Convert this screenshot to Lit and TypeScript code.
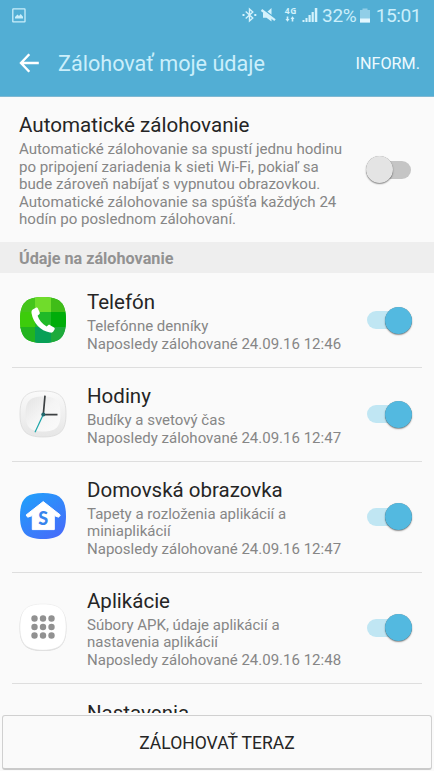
import { LitElement, html, svg, css } from "lit";
import { customElement, property } from "lit/decorators.js";

type Item = { icon: string; title: string; lines: string[] };

const ITEMS: Item[] = [
  { icon: "phone", title: "Telefón", lines: ["Telefónne denníky", "Naposledy zálohované 24.09.16 12:46"] },
  { icon: "clock", title: "Hodiny", lines: ["Budíky a svetový čas", "Naposledy zálohované 24.09.16 12:47"] },
  { icon: "home", title: "Domovská obrazovka", lines: ["Tapety a rozloženia aplikácií a", "miniaplikácií", "Naposledy zálohované 24.09.16 12:47"] },
  { icon: "apps", title: "Aplikácie", lines: ["Súbory APK, údaje aplikácií a", "nastavenia aplikácií", "Naposledy zálohované 24.09.16 12:48"] },
];

const SQUIRCLE = "M24 1C41 1 47 7 47 24S41 47 24 47S1 41 1 24S7 1 24 1Z";

const ICONS: Record<string, unknown> = {
  phone: svg`
    <defs>
      <clipPath id="c"><path d=${SQUIRCLE} /></clipPath>
      <linearGradient id="g" x1="0" y1="0" x2="1" y2="1"><stop offset="0" stop-color="#30c010" /><stop offset="1" stop-color="#12a53c" /></linearGradient>
    </defs>
    <g clip-path="url(#c)">
      <rect width="48" height="48" fill="url(#g)" />
      <rect width="16" height="16" fill="#45c51b" />
      <rect x="16" width="16" height="16" fill="#70dc2b" />
      <rect x="32" width="16" height="16" fill="#40bd18" />
      <rect y="16" width="16" height="16" fill="#3dcc0b" />
      <rect x="16" y="16" width="16" height="16" fill="#20b928" />
      <rect x="32" y="16" width="16" height="15" fill="#00ad0a" />
      <rect y="31" width="16" height="17" fill="#22b41f" />
      <rect x="16" y="31" width="16" height="17" fill="#08a057" />
      <rect x="32" y="31" width="16" height="17" fill="#1eaa3b" />
    </g>
    <path fill="#fff" d="M13.700 13.400 17.300 11.600C18 11.300 18.500 11.600 18.800 12.300L20.700 16.600C21 17.400 20.800 18 20 18.600L18.600 19.700C20.200 24.200 23 27.800 27.600 30.400L29.100 29.200C29.800 28.700 30.500 28.800 31.200 29.200L35 31.600C35.800 32.100 36 32.800 35.500 33.600L34.300 35.500C33.600 36.600 32.600 36.800 31 36.500C21.500 34.700 14.300 27.300 12.600 17.500C12.300 15.600 12.400 14.200 13.700 13.400Z" />`,
  clock: svg`
    <defs>
      <linearGradient id="f" x1="0" y1="0" x2="0" y2="1"><stop offset="0" stop-color="#fafafa" /><stop offset="1" stop-color="#e6e6e6" /></linearGradient>
      <linearGradient id="i" x1="0" y1="0" x2="1" y2="1"><stop offset="0" stop-color="#e3e3e3" /><stop offset=".5" stop-color="#f5f5f5" /><stop offset="1" stop-color="#fbfbfb" /></linearGradient>
    </defs>
    <path d=${SQUIRCLE} fill="url(#f)" stroke="#dadada" stroke-width=".8" />
    <path d="M24 6.500C37 6.500 41.500 11 41.500 24S37 41.500 24 41.500S6.500 37 6.500 24S11 6.500 24 6.500Z" fill="url(#i)" />
    <path d="M24.300 24.500 26 5.700M24.300 24.700H38.500" fill="none" stroke="#3c4042" stroke-width="1.700" />
    <path d="M24.300 24.500 16 42.200" stroke="#1ba4a8" stroke-width="1.200" />
    <circle cx="24.300" cy="24.500" r="2" fill="#20686d" />`,
  home: svg`
    <defs><linearGradient id="h" x1=".1" y1="0" x2=".8" y2="1"><stop offset="0" stop-color="#20a0fb" /><stop offset="1" stop-color="#466cfa" /></linearGradient></defs>
    <path d=${SQUIRCLE} fill="url(#h)" />
    <path fill="#fff" stroke="#fff" stroke-width="1" stroke-linejoin="round" d="M24.200 9.600 41.300 23 39.600 25.200 35.300 23.600V37.600H13.300V23.600L8.700 25.200 7.100 23Z" />
    <text x="24.300" y="32.600" text-anchor="middle" font-family="Lato, sans-serif" font-size="18" font-weight="900" fill="#3785ed">S</text>`,
  apps: svg`
    <path d=${SQUIRCLE} transform="translate(0 .7)" fill="#d4d4d4" stroke="#dedede" />
    <path d=${SQUIRCLE} fill="#fff" stroke="#e9e9e9" stroke-width=".5" />
    ${[15.5, 24, 32.5].map((y) => [15.5, 24, 32.5].map((x) => svg`<circle cx=${x} cy=${y} r="3.200" fill="#919191" />`))}`,
};

@customElement("backup-switch")
class BackupSwitch extends LitElement {
  @property({ type: Boolean }) on = false;
  static styles = css`
    :host { display: block; }
    .track { display: flex; align-items: center; width: 45px; height: 18px; border-radius: 9px; background: #c5c5c5; }
    .thumb { flex: none; width: 27px; height: 27px; border-radius: 50%; background: #e4e4e4; box-shadow: 0 1px 1.5px rgba(0, 0, 0, 0.45), 0 0 0.5px rgba(0, 0, 0, 0.4); }
    .on { justify-content: flex-end; background: #c0e6f3; }
    .on .thumb { background: #53b9e0; }
  `;
  render() {
    return html`<div class="track ${this.on ? "on" : ""}"><div class="thumb"></div></div>`;
  }
}

@customElement("app-icon")
class AppIcon extends LitElement {
  @property() name = "";
  static styles = css`
    :host, svg { display: block; width: 48px; height: 48px; }
  `;
  render() {
    return html`<svg viewBox="0 0 48 48">${ICONS[this.name]}</svg>`;
  }
}

@customElement("app-root")
class AppRoot extends LitElement {
  static styles = css`
    * { box-sizing: border-box; }
    :host {
      display: flex; flex-direction: column; height: 771px; width: 434px; overflow: hidden;
      background: #fafafa; color: #252525; font-family: Roboto, sans-serif; white-space: nowrap;
    }
    svg { display: block; flex: none; overflow: visible; }
    header { height: 97px; flex: none; background: #52aed4; border-bottom: 1px solid #7fb8d2; color: #cbeffb; }
    .status { display: flex; align-items: center; height: 30px; padding: 0 13px 0 12px; }
    .tray { margin-left: auto; display: flex; align-items: center; width: 179px; }
    .mute { margin: 0 6px 0 1px; }
    .pct { font-size: 19px; letter-spacing: -0.3px; margin-left: 4px; width: 38px; }
    .time { font-size: 19.2px; margin-left: 6px; letter-spacing: -0.5px; }
    .bar { display: flex; align-items: center; height: 66px; padding: 0 14px 0 19px; }
    .heading { font-size: 21.6px; margin-left: 19px; }
    .info { margin-left: auto; font-size: 16.200px; color: #eefaff; }
    .auto { flex: none; height: 145px; display: flex; align-items: center; padding: 0 23px 0 19px; }
    .auto .copy { padding-top: 2px; }
    .auto .title { font-size: 20.6px; }
    .copy { flex: 1; }
    .copy .title { padding-bottom: 2px; }
    .title { font-size: 20.500px; line-height: 27px; }
    .desc { font-size: 15.080px; line-height: 17.400px; color: #868686; }
    .row .desc { font-size: 15.020px; }
    .section { flex: none; height: 31px; line-height: 34px; padding-left: 19px; background: #eee; color: #929292; font-size: 16.200px; font-weight: 700; }
    .list { flex: 1; overflow: hidden; min-height: 0; }
    .row { display: flex; align-items: center; margin: 0 12px; padding: 0 10px 0 7px; height: 94px; border-bottom: 1px solid #dedede; }
    .tall { height: 111px; }
    .first { height: 95px; padding-top: 1px; }
    .row .copy { margin: 1px 0 0 20px; }
    .row app-icon { margin-bottom: 2px; }
    .row backup-switch { margin-bottom: 1px; }
    .cut { padding: 16px 0 0 87px; }
    .foot { flex: none; height: 58px; padding: 2px 2px 2px 2px; }
    .btn { height: 55px; padding-top: 2px; display: flex; align-items: center; justify-content: center; border: 1px solid #d0d0d0; border-bottom: 2px solid #cacaca; border-radius: 3px; font-size: 17.550px; }
  `;
  render() {
    return html`
      <header>
        <div class="status">
          <svg width="14" height="15" viewBox="0 0 14 15" fill="none" stroke="#c9eefa"><rect x=".8" y=".9" width="12.200" height="13" rx=".5" stroke-width="1.300" /><path d="M3 10.500V9L5.500 6.500 7 8 8.700 6 11 8.700V10.500Z" fill="#c9eefa" stroke="none" /></svg>
          <div class="tray">
            <svg width="15" height="16" viewBox="0 0 15 16" fill="none" stroke="#d4f2fc" stroke-width="1.400"><path d="M3.700 4.500 10.800 11 7.500 14V2L10.800 5 3.700 11.500" /><path d="M.5 8H2.500M12.300 8H14.300" stroke-width="2" /></svg>
            <svg class="mute" width="38" height="16" viewBox="0 0 38 16" fill="#d4f2fc"><path d="M5 5.500H8.500L13.500 1V14.500L8.500 10.800H5Z" /><path d="M4.500 1.800 17.500 11.700" stroke="#52aed4" stroke-width="1.600" /><path d="M3.500 3 17 13.200" stroke="#d4f2fc" stroke-width="2.200" /><text x="26.800" y="7" font-family="Open Sans, sans-serif" font-size="8.500" font-weight="700" textLength="11.500">4G</text><path d="M28.700 9.500H30.300V12H31.500L29.500 14.800 27.500 12H28.700ZM33.700 14.500V12H32.500L34.500 9.300 36.500 12H35.300V14.500Z" /></svg>
            <svg width="16" height="16" viewBox="0 0 16 16" fill="#d4f2fc"><path d="M.5 13H2.500V15H.5ZM3.500 11H5.500V15H3.500ZM6.500 8H8.700V15H6.500ZM9.600 5H11.800V15H9.600ZM12.800 1H15.300V15H12.800Z" /></svg>
            <span class="pct">32%</span>
            <svg width="10" height="15" viewBox="0 0 10 15"><path d="M0 2H2.500V.5H7.500V2H10V14.500H0Z" fill="#91cee7" /><path d="M0 10.500H10V14.500H0Z" fill="#e2f7ff" /></svg>
            <span class="time">15:01</span>
          </div>
        </div>
        <div class="bar">
          <svg width="20" height="20" viewBox="0 0 20 20" fill="none" stroke="#fff" stroke-width="2.400"><path d="M10.300 1.200 2 10 10.300 18.800M2 10H19.800" /></svg>
          <span class="heading">Zálohovať moje údaje</span><span class="info">INFORM.</span>
        </div>
      </header>
      <div class="auto">
        <div class="copy">
          <div class="title">Automatické zálohovanie</div>
          <div class="desc">Automatické zálohovanie sa spustí jednu hodinu<br />po pripojení zariadenia k sieti Wi-Fi, pokiaľ sa<br />bude zároveň nabíjať s vypnutou obrazovkou.<br />Automatické zálohovanie sa spúšťa každých 24<br />hodín po poslednom zálohovaní.</div>
        </div>
        <backup-switch></backup-switch>
      </div>
      <div class="section">Údaje na zálohovanie</div>
      <div class="list">
        ${ITEMS.map((it, i) => html`<div class="row ${it.lines.length > 2 ? "tall" : ""} ${i === 0 ? "first" : ""}">
          <app-icon name=${it.icon}></app-icon>
          <div class="copy"><div class="title">${it.title}</div>${it.lines.map((l) => html`<div class="desc">${l}</div>`)}</div>
          <backup-switch on></backup-switch>
        </div>`)}
        <div class="cut title">Nastavenia</div>
      </div>
      <div class="foot"><div class="btn">ZÁLOHOVAŤ TERAZ</div></div>
    `;
  }
}
